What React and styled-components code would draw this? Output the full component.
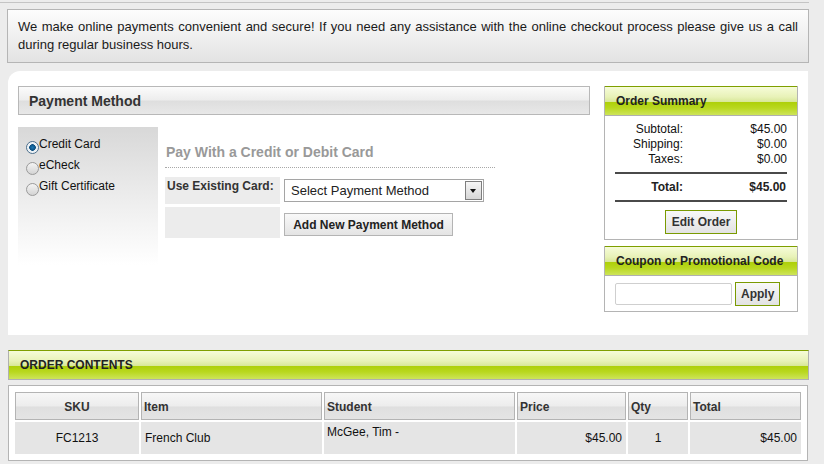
import styled, { createGlobalStyle } from "styled-components";

const GlobalStyle = createGlobalStyle`
  html, body {
    margin: 0;
    padding: 0;
    background: #ececec;
  }
  body {
    font-family: "Liberation Sans", Arial, Helvetica, sans-serif;
    color: #222;
  }
`;

const summaryRows = [
  { label: "Subtotal:", value: "$45.00" },
  { label: "Shipping:", value: "$0.00" },
  { label: "Taxes:", value: "$0.00" },
];

const columns = [
  { title: "SKU", width: 124, align: "center" },
  { title: "Item", width: 181, align: "left" },
  { title: "Student", width: 191, align: "left" },
  { title: "Price", width: 109, align: "left" },
  { title: "Qty", width: 60, align: "left" },
  { title: "Total", width: 111, align: "left" },
];

const orderLines = [
  { sku: "FC1213", item: "French Club", student: "McGee, Tim -", price: "$45.00", qty: 1, total: "$45.00" },
];

const methods = [
  { label: "Credit Card", checked: true },
  { label: "eCheck", checked: false },
  { label: "Gift Certificate", checked: false },
];

function App() {
  return (
    <Page>
      <GlobalStyle />
      <Wrapper>
        <InfoBox>
          We make online payments convenient and secure! If you need any assistance with the online checkout
          process please give us a call during regular business hours.
        </InfoBox>

        <MainPanel>
          <PaymentColumn>
            <GrayHeader>Payment Method</GrayHeader>
            <PaymentBody>
              <MethodList>
                {methods.map((m) => (
                  <MethodItem key={m.label}>
                    <Radio $checked={m.checked} />
                    {m.label}
                  </MethodItem>
                ))}
              </MethodList>
              <CardForm>
                <FormTitle>Pay With a Credit or Debit Card</FormTitle>
                <FormGrid>
                  <LabelCell>Use Existing Card:</LabelCell>
                  <FieldCell>
                    <SelectBox>
                      Select Payment Method
                      <SelectArrow />
                    </SelectBox>
                  </FieldCell>
                  <LabelCell $tall />
                  <FieldCell>
                    <GrayButton>Add New Payment Method</GrayButton>
                  </FieldCell>
                </FormGrid>
              </CardForm>
            </PaymentBody>
          </PaymentColumn>

          <SideColumn>
            <SideBox>
              <GreenHeader>Order Summary</GreenHeader>
              <SideBody>
                <SummaryTable>
                  <tbody>
                    {summaryRows.map((r) => (
                      <tr key={r.label}>
                        <td>{r.label}</td>
                        <td>{r.value}</td>
                      </tr>
                    ))}
                  </tbody>
                </SummaryTable>
                <TotalRow>
                  <span>Total:</span>
                  <span>$45.00</span>
                </TotalRow>
                <ButtonRow>
                  <GreenButton>Edit Order</GreenButton>
                </ButtonRow>
              </SideBody>
            </SideBox>

            <SideBox>
              <GreenHeader>Coupon or Promotional Code</GreenHeader>
              <CouponBody>
                <CouponInput type="text" />
                <GreenButton $small>Apply</GreenButton>
              </CouponBody>
            </SideBox>
          </SideColumn>
        </MainPanel>

        <GreenHeader $wide>ORDER CONTENTS</GreenHeader>
        <TableBox>
          <OrderTable>
            <colgroup>
              {columns.map((c) => (
                <col key={c.title} style={{ width: c.width }} />
              ))}
            </colgroup>
            <thead>
              <tr>
                {columns.map((c) => (
                  <HeadCell key={c.title} $align={c.align}>
                    {c.title}
                  </HeadCell>
                ))}
              </tr>
            </thead>
            <tbody>
              {orderLines.map((l) => (
                <tr key={l.sku}>
                  <DataCell $align="center">{l.sku}</DataCell>
                  <DataCell>{l.item}</DataCell>
                  <DataCell $top>{l.student}</DataCell>
                  <DataCell $align="right">{l.price}</DataCell>
                  <DataCell $align="center">{l.qty}</DataCell>
                  <DataCell $align="right">{l.total}</DataCell>
                </tr>
              ))}
            </tbody>
          </OrderTable>
        </TableBox>
      </Wrapper>
    </Page>
  );
}

const Page = styled.div`
  padding-top: 2px;
  min-height: 464px;
  box-sizing: border-box;
`;

const Wrapper = styled.div`
  border-top: 1px solid #c4c4c4;
  padding: 6px 0 0 7px;
  width: 802px;
`;

const InfoBox = styled.div`
  box-sizing: border-box;
  height: 54px;
  border: 1px solid #b5b5b5;
  background: linear-gradient(to bottom, #fdfdfd 0%, #e3e3e3 100%);
  padding: 8px 10px 0;
  font-size: 13px;
  line-height: 18px;
  text-align: justify;
  color: #1a1a1a;
`;

const MainPanel = styled.div`
  margin: 8px 0 0 1px;
  width: 800px;
  box-sizing: border-box;
  background: #fff;
  border-top-left-radius: 12px;
  padding: 15px 10px 23px;
  display: flex;
  justify-content: space-between;
`;

const PaymentColumn = styled.div`
  width: 572px;
`;

const GrayHeader = styled.div`
  box-sizing: border-box;
  height: 29px;
  border: 1px solid #b8b8b8;
  background: linear-gradient(to bottom, #fbfbfb 0%, #ededed 48%, #dedede 52%, #e8e8e8 100%);
  padding-left: 10px;
  font-size: 14px;
  font-weight: bold;
  line-height: 28px;
  color: #333;
`;

const PaymentBody = styled.div`
  display: flex;
  gap: 7px;
  margin-top: 12px;
`;

const MethodList = styled.div`
  width: 140px;
  height: 138px;
  box-sizing: border-box;
  padding: 6px 0 0 8px;
  background: linear-gradient(to bottom, #d8d8d8 0%, #f0f0f0 60%, #ffffff 100%);
`;

const MethodItem = styled.div`
  height: 21px;
  display: flex;
  align-items: center;
  font-size: 12px;
  color: #111;
`;

const Radio = styled.span`
  width: 11px;
  height: 11px;
  border-radius: 50%;
  border: 1px solid ${(p) => (p.$checked ? "#4c6f8c" : "#9a9a9a")};
  background: ${(p) =>
    p.$checked
      ? "radial-gradient(circle at 50% 50%, #1b78b5 0, #0c4f80 3px, #e8eef3 3.6px, #ffffff 100%)"
      : "linear-gradient(to bottom, #f4f4f4, #d4d4d4)"};
  margin-top: 7px;
  flex-shrink: 0;
`;

const CardForm = styled.div`
  width: 330px;
`;

const FormTitle = styled.div`
  padding: 16px 0 6px 1px;
  font-size: 14px;
  font-weight: bold;
  line-height: 18px;
  color: #999;
  border-bottom: 1px dotted #a8a8a8;
  margin-bottom: 9px;
`;

const FormGrid = styled.div`
  display: grid;
  grid-template-columns: 115px auto;
  column-gap: 4px;
  row-gap: 3px;
`;

const LabelCell = styled.div`
  height: ${(p) => (p.$tall ? 31 : 27)}px;
  background: #ececec;
  box-sizing: border-box;
  padding: 2px 2px 0;
  font-size: 12px;
  font-weight: bold;
  line-height: 14px;
  color: #333;
`;

const FieldCell = styled.div`
  padding-top: 2px;
  &:last-child {
    padding-top: 6px;
  }
`;

const SelectBox = styled.div`
  position: relative;
  width: 200px;
  height: 23px;
  box-sizing: border-box;
  border: 1px solid #a5a5a5;
  padding-left: 6px;
  font-size: 13px;
  line-height: 21px;
  color: #222;
  background: #fff;
`;

const SelectArrow = styled.span`
  position: absolute;
  right: 1px;
  top: 1px;
  width: 17px;
  height: 19px;
  box-sizing: border-box;
  border: 1px solid #7e7e7e;
  background: linear-gradient(to bottom, #f6f6f6, #d6d6d6);
  &::after {
    content: "";
    position: absolute;
    left: 4px;
    top: 7px;
    border-left: 3.5px solid transparent;
    border-right: 3.5px solid transparent;
    border-top: 4px solid #111;
  }
`;

const GrayButton = styled.button`
  height: 23px;
  width: 169px;
  padding: 0;
  border: 1px solid #b4b4b4;
  background: linear-gradient(to bottom, #f9f9f9, #e4e4e4);
  font-family: "Liberation Sans", Arial, sans-serif;
  font-size: 12px;
  font-weight: bold;
  color: #222;
  cursor: pointer;
`;

const SideColumn = styled.div`
  width: 194px;
  display: flex;
  flex-direction: column;
  gap: 6px;
`;

const SideBox = styled.div`
  border: 1px solid #b4b4b4;
  border-top: none;
  background: #fff;
`;

const GreenHeader = styled.div`
  box-sizing: border-box;
  height: 30px;
  border-top: 1px solid #7f9f00;
  border-bottom: 1px solid #b0b0b0;
  ${(p) => (p.$wide ? "border-left: 1px solid #b0b0b0; border-right: 1px solid #b0b0b0; width: 801px; margin: 15px 0 5px 1px;" : "")}
  background: linear-gradient(to bottom, #f6fcd8 0%, #e8f2b8 35%, #d9e89a 52%, #aed00a 55%, #b9d81f 75%, #cde45a 100%);
  padding-left: 11px;
  font-size: 12px;
  font-weight: bold;
  line-height: 28px;
  color: #222;
`;

const SideBody = styled.div`
  padding: 6px 10px 5px;
`;

const SummaryTable = styled.table`
  width: 172px;
  border-collapse: collapse;
  font-size: 12px;
  td {
    padding: 0;
    height: 15px;
    line-height: 15px;
    text-align: right;
    color: #111;
  }
  td:first-child {
    width: 68px;
  }
`;

const TotalRow = styled.div`
  margin-top: 5px;
  width: 172px;
  height: 30px;
  box-sizing: border-box;
  border-top: 2px solid #4a4a4a;
  border-bottom: 2px solid #4a4a4a;
  display: grid;
  grid-template-columns: 68px 1fr;
  align-items: center;
  font-size: 12px;
  font-weight: bold;
  text-align: right;
  span:last-child {
    padding-right: 1px;
  }
`;

const ButtonRow = styled.div`
  display: flex;
  justify-content: center;
  margin-top: 8px;
`;

const GreenButton = styled.button`
  height: 24px;
  padding: 0 ${(p) => (p.$small ? 5 : 6)}px;
  border: 1px solid #7a9a01;
  background: linear-gradient(to bottom, #f8f8f8, #e2e2e2);
  font-family: "Liberation Sans", Arial, sans-serif;
  font-size: 12px;
  font-weight: bold;
  color: #333;
  cursor: pointer;
  margin-left: ${(p) => (p.$small ? 3 : 0)}px;
`;

const CouponBody = styled.div`
  display: flex;
  align-items: center;
  padding: 6px 10px 5px;
`;

const CouponInput = styled.input`
  width: 117px;
  height: 22px;
  box-sizing: border-box;
  border: 1px solid #cfcfcf;
  border-radius: 2px;
  padding: 0 3px;
  margin: 0;
`;

const TableBox = styled.div`
  margin-left: 1px;
  width: 800px;
  box-sizing: border-box;
  border: 1px solid #b4b4b4;
  background: #fff;
  padding: 4px;
`;

const OrderTable = styled.table`
  width: 100%;
  table-layout: fixed;
  border-collapse: separate;
  border-spacing: 2px;
  font-size: 12px;
`;

const HeadCell = styled.th`
  height: 28px;
  box-sizing: border-box;
  border: 1px solid #b4b4b4;
  background: linear-gradient(to bottom, #f7f7f7 0%, #ededed 48%, #dfdfdf 55%, #e4e4e4 100%);
  padding: 2px 2px 0;
  text-align: ${(p) => p.$align};
  font-weight: bold;
  color: #333;
`;

const DataCell = styled.td`
  height: 32px;
  box-sizing: border-box;
  background: #e5e5e5;
  padding: ${(p) => (p.$top ? "3px 3px 0" : "0 4px")};
  text-align: ${(p) => p.$align || "left"};
  vertical-align: ${(p) => (p.$top ? "top" : "middle")};
  color: #111;
`;

export default App;
